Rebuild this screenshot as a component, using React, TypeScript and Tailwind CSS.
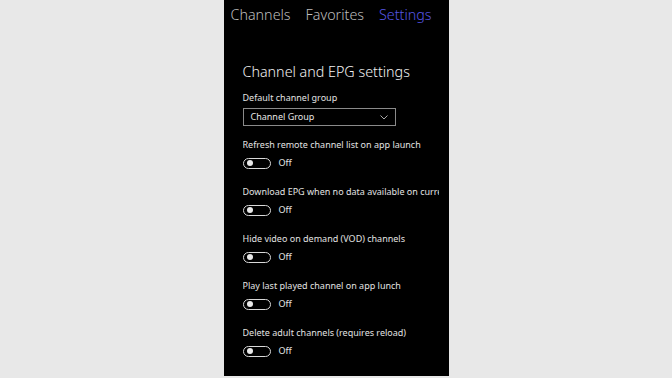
import React from "react";

const font = { fontFamily: '"Noto Sans", "Open Sans", sans-serif' };

function Toggle() {
  return (
    <div className="mt-[4px] h-[14px] flex items-center">
      <div className="w-[28px] h-[11px] rounded-full border-[1.5px] border-[#d8d8d8] flex items-center pl-[3px]">
        <div className="w-[6px] h-[6px] rounded-full bg-[#e8e8e8]" />
      </div>
      <span className="ml-[8px] text-[9px] leading-[14px] text-[#e6e6e6]">Off</span>
    </div>
  );
}

function Setting({ label, first }: { label: string; first?: boolean }) {
  return (
    <div className={first ? "mt-[12px]" : "mt-[15px]"}>
      <div className="h-[14px] text-[9px] leading-[14px] text-[#e2e2e2] whitespace-nowrap overflow-hidden">
        {label}
      </div>
      <Toggle />
    </div>
  );
}

export default function App() {
  const settings = [
    "Refresh remote channel list on app launch",
    "Download EPG when no data available on current",
    "Hide video on demand (VOD) channels",
    "Play last played channel on app lunch",
    "Delete adult channels (requires reload)",
  ];
  return (
    <div className="w-[672px] h-[378px] bg-[#e8e8e8] flex justify-center" style={font}>
      <div className="w-[225px] h-[376px] bg-black flex flex-col overflow-hidden">
        <div className="h-[30px] flex items-center pl-[7px] gap-[15px] text-[14.3px] leading-[30px] font-light">
          <span className="text-[#bdbdbd]">Channels</span>
          <span className="text-[#bdbdbd]">Favorites</span>
          <span className="text-[#5656e2]">Settings</span>
        </div>
        <div className="pl-[19px] pr-[10px] flex flex-col">
          <div className="mt-[32px] h-[20px] text-[14.3px] leading-[20px] font-light text-[#f2f2f2] whitespace-nowrap">
            Channel and EPG settings
          </div>
          <div className="mt-[9px] h-[14px] text-[9px] leading-[14px] text-[#e2e2e2]">
            Default channel group
          </div>
          <div className="mt-[3px] w-[153px] h-[18px] border border-[#8a8a8a] flex items-center justify-between pl-[7px] pr-[7px]">
            <span className="text-[9px] leading-[14px] text-[#e6e6e6]">Channel Group</span>
            <svg width="8" height="5" viewBox="0 0 8 5" fill="none">
              <path d="M0.5 0.5 L4 4 L7.5 0.5" stroke="#bdbdbd" strokeWidth="0.9" />
            </svg>
          </div>
          {settings.map((s, i) => (
            <Setting key={s} label={s} first={i === 0} />
          ))}
        </div>
      </div>
    </div>
  );
}
